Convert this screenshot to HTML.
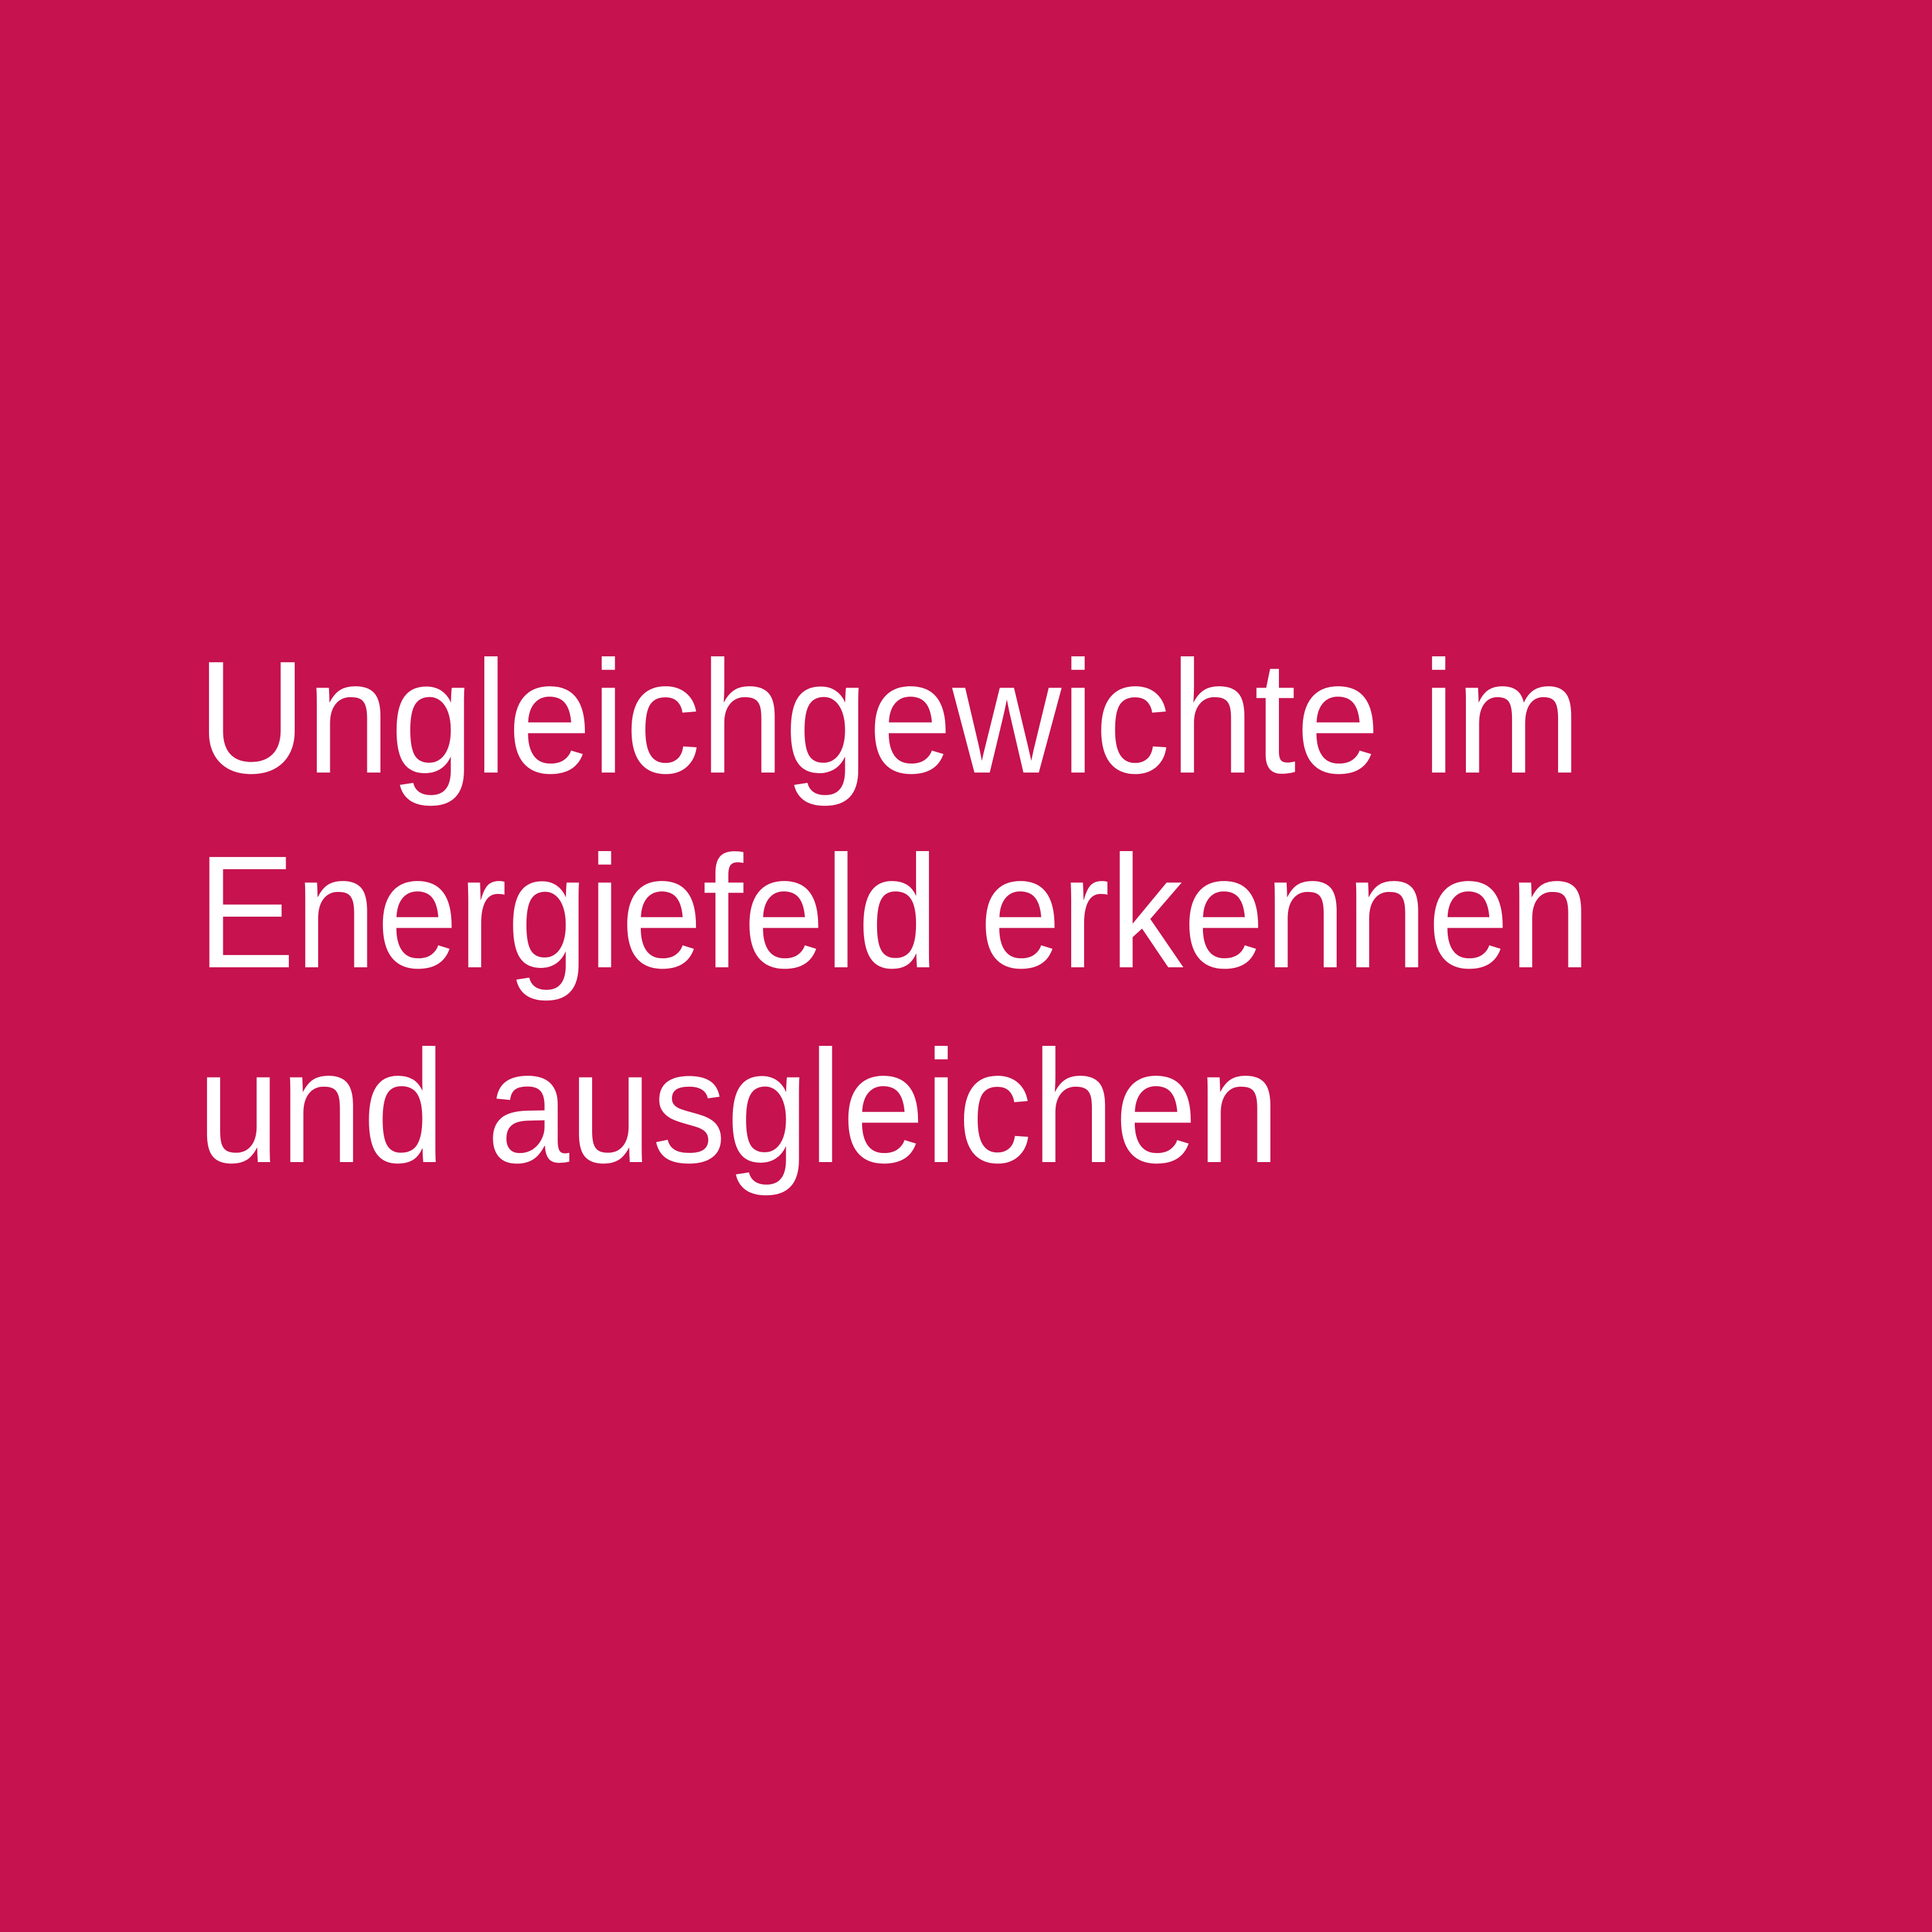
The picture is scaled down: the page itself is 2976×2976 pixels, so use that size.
<!DOCTYPE html>
<html><head><style>
html,body{margin:0;padding:0;}
body{width:2976px;height:2976px;background:#C6124F;position:relative;overflow:hidden;}
.t{position:absolute;left:304px;font-family:"Liberation Sans",sans-serif;font-size:247px;line-height:300px;color:#fff;white-space:nowrap;transform-origin:0 0;}
</style></head><body>
<div class="t" style="top:955px;transform:scaleX(0.941)">Ungleichgewichte im</div>
<div class="t" style="top:1255px;transform:scaleX(0.914)">Energiefeld erkennen</div>
<div class="t" style="top:1555px;transform:scaleX(0.927)">und ausgleichen</div>
</body></html>
